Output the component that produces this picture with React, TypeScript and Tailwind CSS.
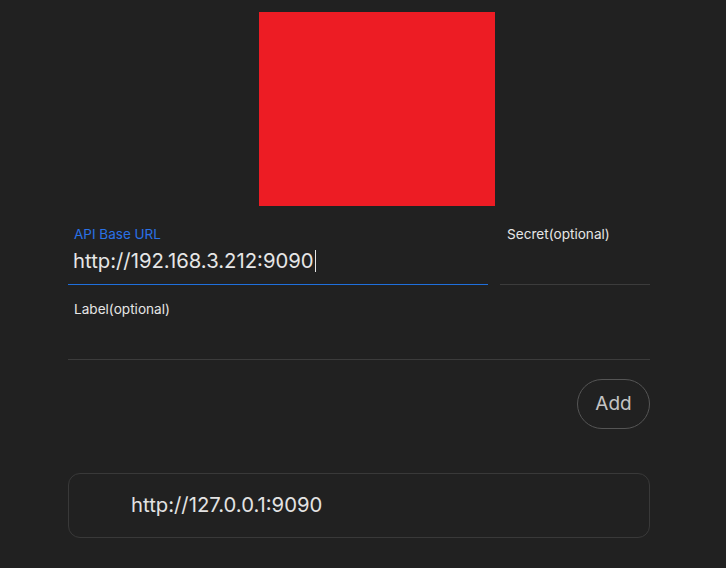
import React from 'react';

const font = { fontFamily: 'Inter, "Noto Sans", sans-serif' };

const App: React.FC = () => {
  return (
    <div className="min-h-[568px] w-full bg-[#212121] text-[#e3e3e3]" style={font}>
      <div className="ml-[68px] w-[582px] pt-[12px]">
        <div className="ml-[191px] h-[194px] w-[236px] bg-[#ed1c24]" />

        <div className="mt-[3px] flex gap-[12px]">
          <div className="h-[76px] w-[420px] border-b border-[#1f6fdc] pl-[6px] pt-[17px]">
            <div className="text-[13.5px] leading-[16px] text-[#2a72e6]">API Base URL</div>
            <div className="-ml-[1px] mt-[5px] flex items-center text-[20.3px] leading-[28px] text-[#e6e6e6]">
              http://192.168.3.212:9090
              <span className="ml-[1px] inline-block h-[22px] w-px bg-[#e6e6e6]" />
            </div>
          </div>
          <div className="h-[76px] flex-1 border-b border-[#3c3c3c] pl-[7px] pt-[17px]">
            <div className="text-[13.6px] leading-[16px] text-[#e6e6e6]">Secret(optional)</div>
          </div>
        </div>

        <div className="h-[75px] border-b border-[#3c3c3c] pl-[6px] pt-[16px]">
          <div className="text-[13.6px] leading-[16px] text-[#e6e6e6]">Label(optional)</div>
        </div>

        <div className="mt-[19px] flex justify-end">
          <button className="h-[50px] w-[73px] rounded-full border border-[#555555] pt-px text-[19px] text-[#c4c4c4]">
            Add
          </button>
        </div>

        <div className="mt-[44px] flex h-[65px] items-center rounded-[12px] border border-[#393939] pl-[62px] text-[20.3px] text-[#e3e3e3]">
          http://127.0.0.1:9090
        </div>
      </div>
    </div>
  );
};

export default App;
